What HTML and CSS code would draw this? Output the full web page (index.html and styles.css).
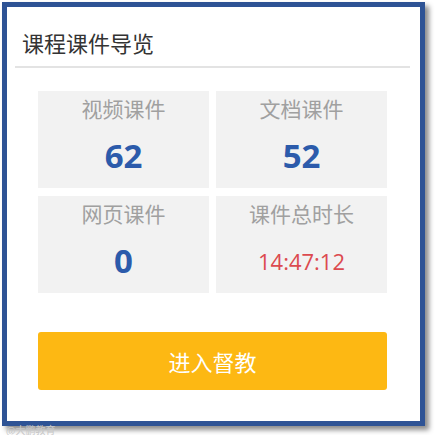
FILE: index.html
```html
<!DOCTYPE html>
<html lang="zh-CN">
<head>
  <meta charset="UTF-8" />
  <title>课程课件导览</title>
  <link rel="stylesheet" href="styles.css">
</head>
<body>

  <div class="panel">
    <div class="panel-title">课程课件导览</div>

    <div class="stats">
      <div class="stat">
        <div class="stat-label">视频课件</div>
        <div class="stat-value">62</div>
      </div>
      <div class="stat">
        <div class="stat-label">文档课件</div>
        <div class="stat-value">52</div>
      </div>
      <div class="stat">
        <div class="stat-label">网页课件</div>
        <div class="stat-value">0</div>
      </div>
      <div class="stat">
        <div class="stat-label">课件总时长</div>
        <div class="stat-value time">14:47:12</div>
      </div>
    </div>

    <button class="enter-btn">进入督教</button>
  </div>

  <div class="watermark">@大鹏教育</div>

</body>
</html>
```

FILE: styles.css
```css
body {
  margin: 0;
  background: #fff;
  font-family: "Noto Sans CJK SC", "Noto Sans", sans-serif;
}

.panel {
  box-sizing: border-box;
  width: 423px;
  height: 424px;
  margin: 2px 0 0 2px;
  border: 5px solid #2e5395;
  background: #fff;
  box-shadow: 4px 4px 5px rgba(0, 0, 0, 0.45);
  padding: 0 10px 0 8px;
}

.panel-title {
  padding: 23px 0 11px 7px;
  font-size: 22px;
  line-height: 25px;
  color: #333;
  border-bottom: 2px solid #e3e3e3;
}

.stats {
  display: grid;
  grid-template-columns: 171px 171px;
  gap: 8px 7px;
  margin: 23px 23px 0;
}

.stat {
  height: 97px;
  background: #f2f2f2;
  text-align: center;
}

.stat-label {
  padding-top: 5px;
  font-size: 21px;
  line-height: 25px;
  color: #a0a0a0;
}

.stat-value {
  margin-top: 15px;
  font-family: "Open Sans", "Liberation Sans", sans-serif;
  font-weight: bold;
  font-size: 33px;
  line-height: 40px;
  color: #2c5bab;
}

.stat-value.time {
  font-weight: normal;
  font-size: 22px;
  color: #dc4a4f;
}

.enter-btn {
  display: block;
  width: 349px;
  height: 58px;
  margin: 39px 0 0 23px;
  border: none;
  border-radius: 3px;
  background: #fdb813;
  color: #fff;
  font-family: "Noto Sans CJK SC", sans-serif;
  font-size: 22px;
}

.watermark {
  margin: -2px 0 0 6px;
  font-size: 10px;
  line-height: 11px;
  color: #c8c8c8;
}
```
